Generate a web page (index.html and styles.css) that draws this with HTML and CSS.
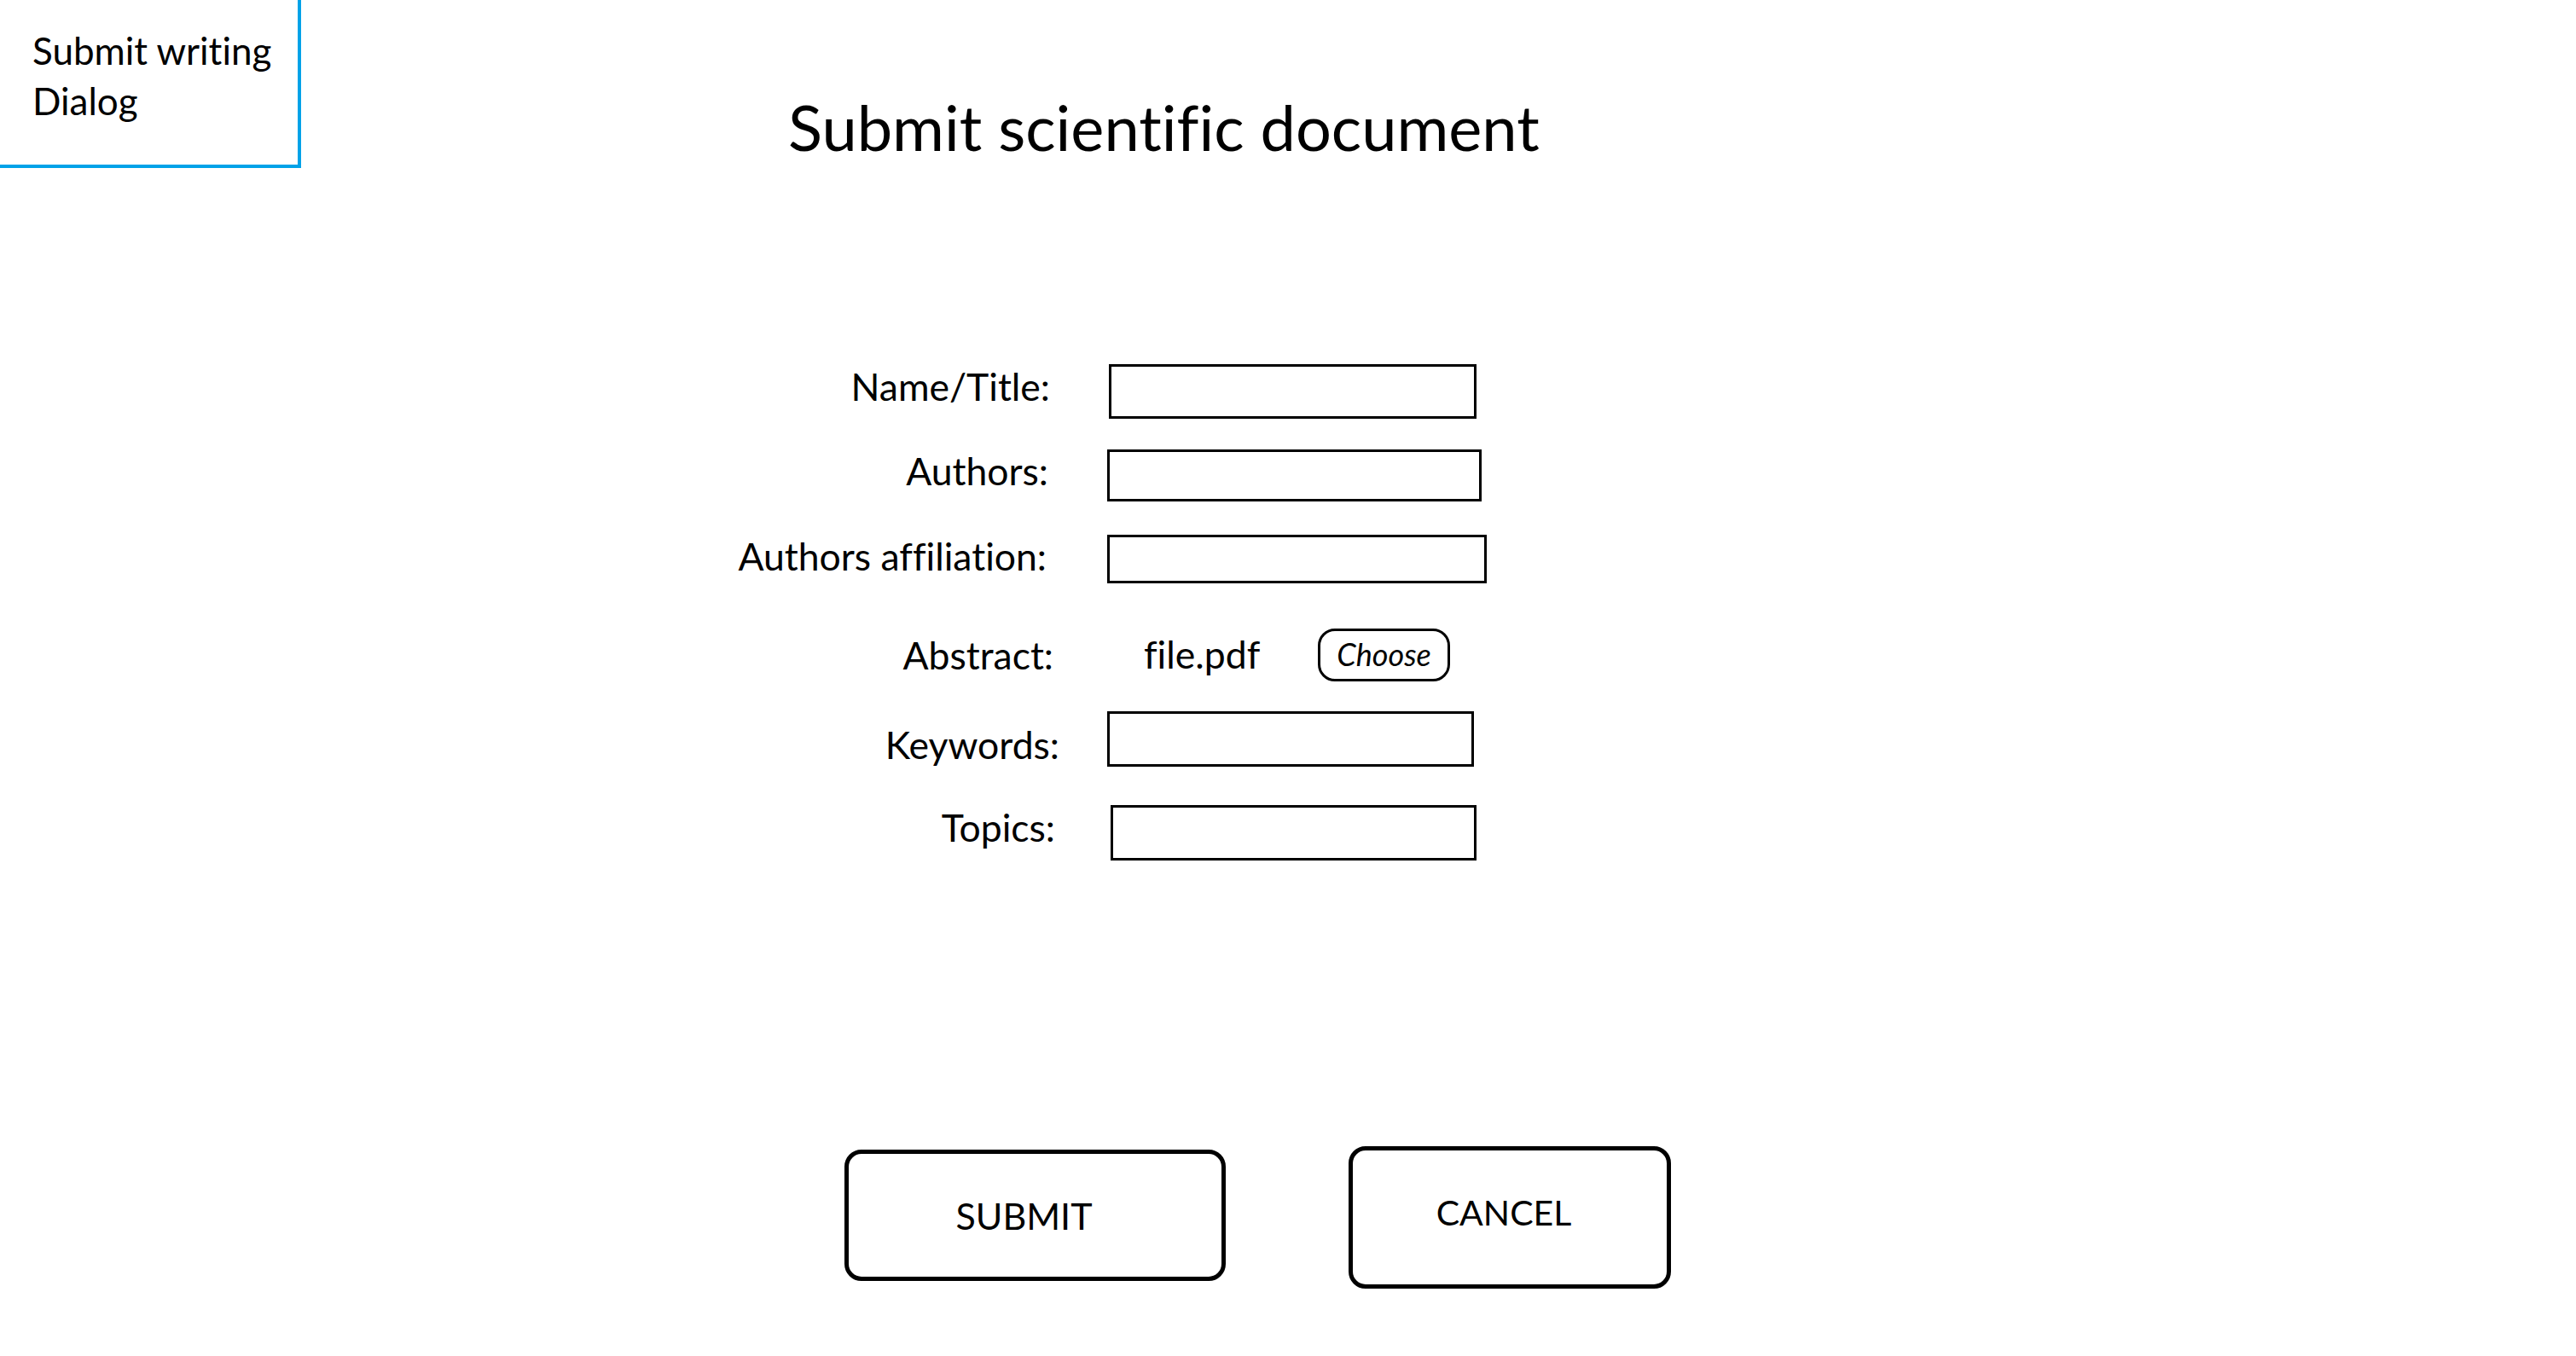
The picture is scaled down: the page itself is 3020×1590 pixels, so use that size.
FILE: index.html
```html
<!DOCTYPE html>
<html lang="en">
<head>
<meta charset="utf-8">
<title>Submit scientific document</title>
<link rel="stylesheet" href="styles.css">
</head>
<body>
<div class="page">
  <header class="header">
    <div class="note">Submit writing<br>Dialog</div>
    <h1 class="title">Submit scientific document</h1>
  </header>

  <form class="form">
    <div class="row row--name">
      <label class="label">Name/Title:</label>
      <div class="box"></div>
    </div>
    <div class="row row--authors">
      <label class="label">Authors:</label>
      <div class="box"></div>
    </div>
    <div class="row row--affil">
      <label class="label">Authors affiliation:</label>
      <div class="box"></div>
    </div>
    <div class="row row--abstract">
      <label class="label">Abstract:</label>
      <div class="file">
        <span class="file-name">file.pdf</span>
        <span class="choose">Choose</span>
      </div>
    </div>
    <div class="row row--keywords">
      <label class="label">Keywords:</label>
      <div class="box"></div>
    </div>
    <div class="row row--topics">
      <label class="label">Topics:</label>
      <div class="box"></div>
    </div>
  </form>

  <div class="actions">
    <div class="btn btn--submit">SUBMIT</div>
    <div class="btn btn--cancel">CANCEL</div>
  </div>
</div>
</body>
</html>
```

FILE: styles.css
```css
html, body {
  margin: 0;
  padding: 0;
  background: #ffffff;
}

body {
  width: 3020px;
  height: 1590px;
  overflow: hidden;
  font-family: Lato, "Open Sans", "Liberation Sans", sans-serif;
  font-variant-ligatures: none;
  font-feature-settings: "liga" 0, "clig" 0;
  color: #000;
}

.page {
  display: flex;
  flex-direction: column;
}

.header {
  display: flex;
  align-items: flex-start;
}

.note {
  box-sizing: border-box;
  width: 353px;
  height: 197px;
  border-right: 4px solid #00a2e8;
  border-bottom: 4px solid #00a2e8;
  padding: 30px 0 0 38px;
  font-size: 44px;
  line-height: 59px;
}

.title {
  margin: 112px 0 0 571px;
  font-size: 74px;
  font-weight: 400;
  line-height: 1;
  white-space: nowrap;
}

.form {
  display: flex;
  flex-direction: column;
  margin-top: 230px;
}

.row {
  display: flex;
  align-items: center;
}

.label {
  box-sizing: border-box;
  width: 1243px;
  text-align: right;
  font-size: 44.5px;
  line-height: 1;
  white-space: nowrap;
}

.box {
  box-sizing: border-box;
  border: 3px solid #000;
  background: #fff;
}

.row--name { height: 64px; }
.row--name .label { padding-right: 12px; margin-bottom: 12px; }
.row--name .box { width: 431px; height: 64px; margin-left: 57px; }

.row--authors { height: 61px; margin-top: 36px; }
.row--authors .label { padding-right: 14px; margin-bottom: 10px; }
.row--authors .box { width: 439px; height: 61px; margin-left: 55px; }

.row--affil { height: 57px; margin-top: 39px; }
.row--affil .label { padding-right: 16px; margin-bottom: 6px; }
.row--affil .box { width: 445px; height: 57px; margin-left: 55px; }

.row--abstract { height: 62px; margin-top: 53px; }
.row--abstract .label { padding-right: 8px; margin-bottom: 0; }

.file {
  display: flex;
  align-items: center;
  margin-left: 98px;
}

.file-name {
  font-size: 44.5px;
  line-height: 1;
  width: 204px;
  margin-bottom: 2px;
}

.choose {
  box-sizing: border-box;
  width: 155px;
  height: 62px;
  border: 3px solid #000;
  border-radius: 20px;
  display: flex;
  align-items: center;
  justify-content: center;
  font-style: italic;
  font-size: 36px;
  line-height: 1;
  padding-bottom: 2px;
}

.row--keywords { height: 65px; margin-top: 35px; }
.row--keywords .label { padding-right: 1px; margin-top: 14px; }
.row--keywords .box { width: 430px; height: 65px; margin-left: 55px; }

.row--topics { height: 65px; margin-top: 45px; }
.row--topics .label { padding-right: 6px; margin-bottom: 12px; }
.row--topics .box { width: 429px; height: 65px; margin-left: 59px; }

.actions {
  display: flex;
  align-items: flex-start;
  margin: 335px 0 0 990px;
  gap: 144px;
}

.btn {
  box-sizing: border-box;
  border: 5px solid #000;
  border-radius: 20px;
  display: flex;
  align-items: center;
  justify-content: center;
  font-size: 43px;
  line-height: 1;
}

.btn--submit {
  width: 447px;
  height: 154px;
  margin-top: 4px;
  padding-right: 26px;
}

.btn--cancel {
  width: 378px;
  height: 167px;
  padding-right: 14px;
  padding-bottom: 13px;
  font-size: 41px;
}
```
